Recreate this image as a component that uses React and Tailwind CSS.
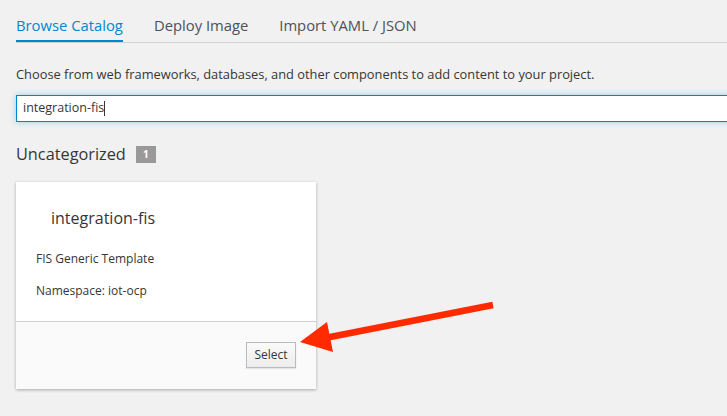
import React from 'react';

const tabs = [
  { label: 'Browse Catalog', active: true },
  { label: 'Deploy Image' },
  { label: 'Import YAML / JSON' },
];

const App = () => {
  return (
    <div className="relative w-[727px] h-[416px] overflow-hidden bg-[#f1f1f1] text-[#363636] font-['Open_Sans','Liberation_Sans',sans-serif]">
      <div className="pl-4">
        {/* tabs */}
        <div className="flex gap-[31px] border-b border-[#d1d1d1] pt-[14px] h-[43px]">
          {tabs.map((t) => (
            <div
              key={t.label}
              className={`text-[14.8px] leading-[22px] pb-[5px] ${
                t.active ? 'text-[#0088ce] border-b-[2px] border-[#0088ce]' : 'text-[#4d5258]'
              }`}
            >
              {t.label}
            </div>
          ))}
        </div>

        <p className="mt-[22px] text-[12.85px] leading-[18px]">
          Choose from web frameworks, databases, and other components to add content to your project.
        </p>

        <div className="mt-[12px] h-[27px] w-[740px] bg-white border border-[#0088ce] shadow-[0_0_6px_rgba(0,136,206,0.35)] flex items-center pl-[6px]">
          <span className="text-[12.5px]">integration-fis</span>
          <span className="w-px h-[15px] bg-[#363636]" />
        </div>

        <div className="mt-[22px] flex items-center gap-[10px] h-[20px]">
          <h2 className="text-[16.3px] leading-[20px]">Uncategorized</h2>
          <span className="bg-[#999] text-white text-[10px] font-bold w-[20px] h-[17px] flex items-center justify-center">1</span>
        </div>

        <div className="mt-[18px] w-[300px] bg-white shadow-[0_1px_3px_rgba(0,0,0,0.3)]">
          <div className="px-5 pt-[25px] pb-[21px]">
            <h3 className="pl-[15px] text-[16px] leading-[22px]">integration-fis</h3>
            <p className="mt-[21px] text-[12px] leading-[18px]">FIS Generic Template</p>
            <p className="mt-[14px] text-[12px] leading-[18px]">Namespace: iot-ocp</p>
          </div>
          <div className="border-t border-[#d1d1d1] bg-[#fafafa] h-[68px] flex justify-end items-start pt-[20px] pr-[20px]">
            <button className="h-[26px] w-[50px] border border-[#bbb] bg-gradient-to-b from-[#fafafa] to-[#ededed] text-[12px] text-[#363636] shadow-[0_1px_1px_rgba(0,0,0,0.08)]">
              Select
            </button>
          </div>
        </div>
      </div>

      {/* annotation arrow */}
      <svg className="absolute left-0 top-0 pointer-events-none" width="727" height="416">
        <line x1="493" y1="305" x2="325" y2="338" stroke="#ff2a00" strokeWidth="6.5" />
        <polygon points="300,342 327,322 333,352" fill="#ff2a00" />
      </svg>
    </div>
  );
};

export default App;
